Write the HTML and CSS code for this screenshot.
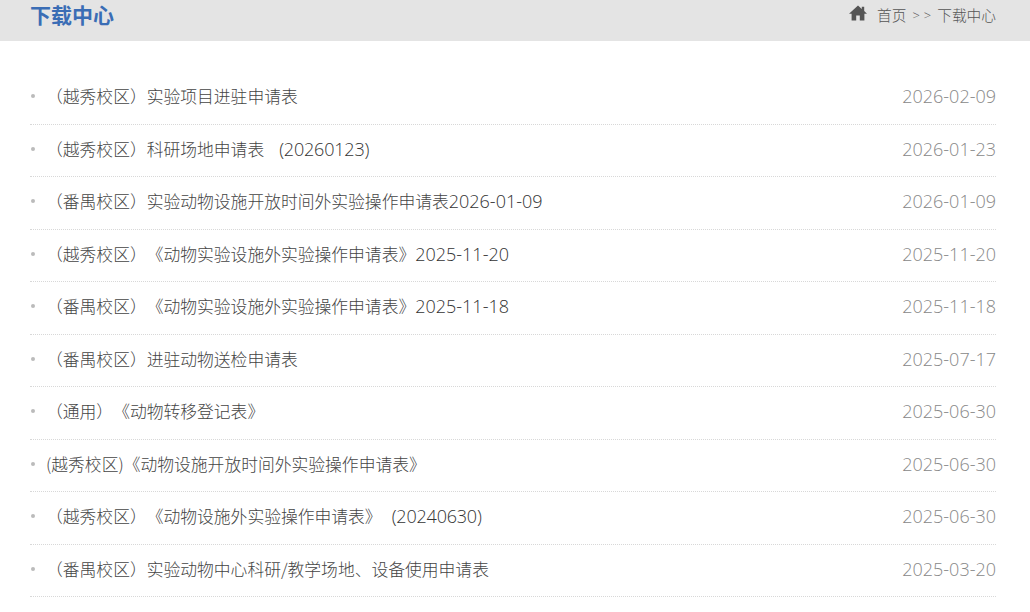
FILE: index.html
```html
<!DOCTYPE html>
<html lang="zh-CN">
<head>
  <meta charset="UTF-8">
  <meta name="viewport" content="width=device-width, initial-scale=1.0">
  <title>下载中心</title>
  <link rel="stylesheet" href="styles.css">
</head>
<body>
  <div class="page-header">
    <span class="page-title">下载中心</span>
    <div class="crumbs">
      <svg class="home-icon" viewBox="0 0 18 16" width="18" height="16">
        <path d="M9 0.5 L12.8 3.9 L12.8 1.8 L15.2 1.8 L15.2 6.1 L18 8.8 L15.4 8.8 L15.4 15.5 L10.8 15.5 L10.8 10.6 L7.2 10.6 L7.2 15.5 L2.6 15.5 L2.6 8.8 L0 8.8 Z"/>
      </svg>
      <span>首页</span>
      <span class="crumb-sep">&gt;&gt;</span>
      <span>下载中心</span>
    </div>
  </div>

  <ul class="file-list">
    <li class="file-item"><span class="file-name">（越秀校区）实验项目进驻申请表</span><span class="file-date">2026-02-09</span></li>
    <li class="file-item"><span class="file-name">（越秀校区）科研场地申请表<span class="num paren wide">(20260123)</span></span><span class="file-date">2026-01-23</span></li>
    <li class="file-item"><span class="file-name">（番禺校区）实验动物设施开放时间外实验操作申请表<span class="num">2026-01-09</span></span><span class="file-date">2026-01-09</span></li>
    <li class="file-item"><span class="file-name">（越秀校区）《动物实验设施外实验操作申请表》<span class="num">2025-11-20</span></span><span class="file-date">2025-11-20</span></li>
    <li class="file-item"><span class="file-name">（番禺校区）《动物实验设施外实验操作申请表》<span class="num">2025-11-18</span></span><span class="file-date">2025-11-18</span></li>
    <li class="file-item"><span class="file-name">（番禺校区）进驻动物送检申请表</span><span class="file-date">2025-07-17</span></li>
    <li class="file-item"><span class="file-name">（通用）《动物转移登记表》</span><span class="file-date">2025-06-30</span></li>
    <li class="file-item"><span class="file-name">(越秀校区)《动物设施开放时间外实验操作申请表》</span><span class="file-date">2025-06-30</span></li>
    <li class="file-item"><span class="file-name">（越秀校区）《动物设施外实验操作申请表》<span class="num paren">(20240630)</span></span><span class="file-date">2025-06-30</span></li>
    <li class="file-item"><span class="file-name">（番禺校区）实验动物中心科研/教学场地、设备使用申请表</span><span class="file-date">2025-03-20</span></li>
  </ul>
</body>
</html>
```

FILE: styles.css
```css
* {
  margin: 0;
  padding: 0;
  box-sizing: border-box;
}

body {
  font-family: "Noto Sans CJK SC", "Noto Sans", sans-serif;
  background: #fff;
  color: #555;
  overflow: hidden;
  text-spacing-trim: space-all;
}

.page-header {
  height: 41px;
  padding: 0 34px 0 30px;
  background: #e4e4e4;
  display: flex;
  align-items: flex-start;
  justify-content: space-between;
}

.page-title {
  font-size: 21px;
  line-height: 29px;
  font-weight: 700;
  color: #3a6db5;
}

.crumbs {
  display: flex;
  align-items: center;
  height: 29px;
  font-size: 14.7px;
  font-weight: 300;
  color: #555;
}

.home-icon {
  fill: #555;
  margin-right: 10px;
  margin-top: -3px;
}

.crumb-sep {
  margin: 0 2px 0 6px;
  font-family: "Open Sans", sans-serif;
  font-size: 13px;
  letter-spacing: 4px;
}

.file-list {
  list-style: none;
  margin: 31px 34px 0 30px;
}

.file-item {
  height: 52.5px;
  padding-bottom: 3px;
  display: flex;
  align-items: center;
  justify-content: space-between;
  border-bottom: 1px dotted #d8d8d8;
  font-size: 16.8px;
  font-weight: 300;
}

.file-item::before {
  content: "";
  width: 4px;
  height: 4px;
  margin: 0 11px 0 1px;
  border-radius: 50%;
  background: #bbb;
}

.file-name {
  flex: 1;
  color: #444;
}

.num,
.file-date {
  font-family: "Open Sans", sans-serif;
  font-size: 18px;
  font-weight: 300;
}

.num {
  color: #333;
}

.paren {
  margin-left: 10px;
  letter-spacing: -0.2px;
}

.paren.wide {
  margin-left: 15px;
}

.file-date {
  color: #888;
}
```
